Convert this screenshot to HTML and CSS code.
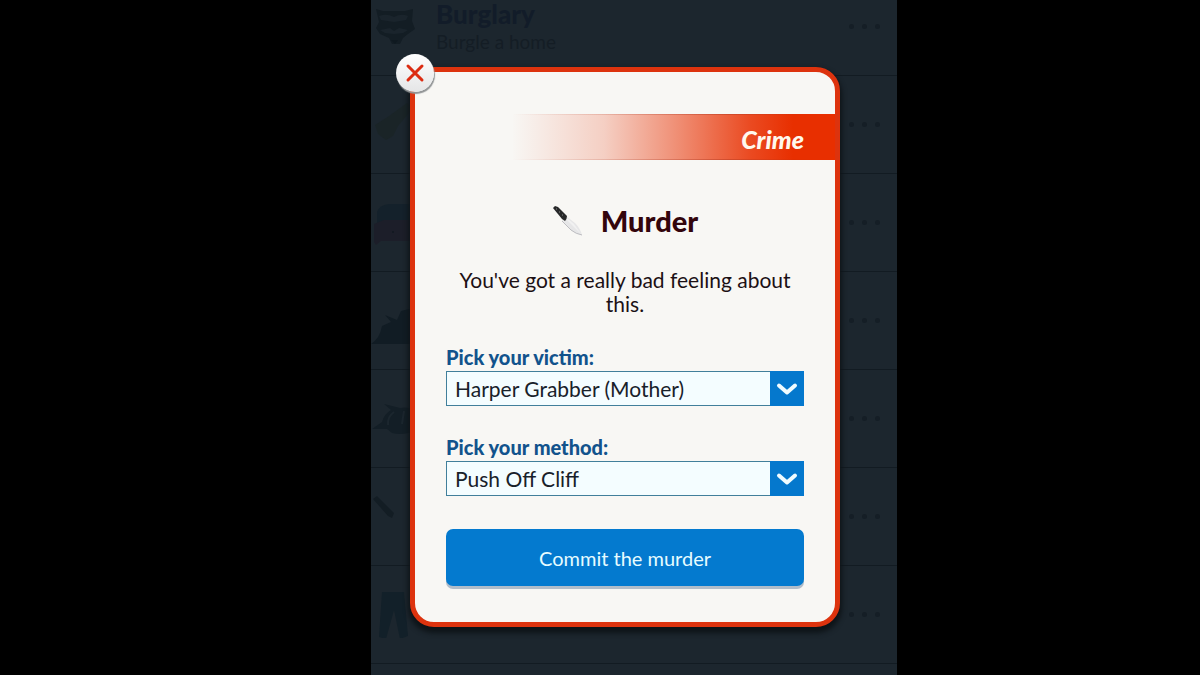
FILE: index.html
```
<!DOCTYPE html>
<html lang="en">
<head>
<meta charset="utf-8">
<meta name="viewport" content="width=device-width, initial-scale=1">
<title>Crime</title>
<link rel="stylesheet" href="styles.css">
</head>
<body>
<main class="phone">
  <ul class="crimes">
    <li class="crime">
      <svg class="crime-icon" viewBox="0 0 46 46" aria-hidden="true"><path fill="#131d24" d="M5 5l7 2h22l8-2-1 12 3 8-7 5-5 4-3 6h-8l-3-6-9-4-4-6 3-6z"/><path fill="#1a242c" d="M8 12q8-3 15 1 7-4 14-1l-2 4-12 2-13-2zM9 26l10-2 4 3 5-3 9 2-5 3-9 1-9-1z"/><path fill="#0f1920" d="M20 36h7l-3 4z"/></svg>
      <div class="crime-text"><h2 class="crime-name">Burglary</h2><p class="crime-note">Burgle a home</p></div>
      <span class="dots"><i></i><i></i><i></i></span>
    </li>
    <li class="crime">
      <svg class="crime-icon" viewBox="0 0 46 46" aria-hidden="true"><path fill="#1a2427" d="M4 23l14-9 18-13 6 5-15 18-5 10-7 4-8-6z"/></svg>
      <span class="dots"><i></i><i></i><i></i></span>
    </li>
    <li class="crime">
      <svg class="crime-icon" viewBox="0 0 46 46" aria-hidden="true"><path fill="#14212b" d="M6 25V12q2-7 12-8h28v21z"/><path fill="#1c1e29" d="M3 24l10-4h33v21H10l-5 4-2-3z"/><circle cx="22" cy="32" r="1" fill="#111820"/></svg>
      <span class="dots"><i></i><i></i><i></i></span>
    </li>
    <li class="crime">
      <svg class="crime-icon" viewBox="0 0 46 46" aria-hidden="true"><path fill="#111c24" d="M0 46q9-6 11-18l9-4-6-7 12 5 4-9 16-4v37z"/></svg>
      <span class="dots"><i></i><i></i><i></i></span>
    </li>
    <li class="crime">
      <svg class="crime-icon" viewBox="0 0 46 46" aria-hidden="true"><path fill="#131e26" d="M1 33l10-7q2-8 9-12l-7-6 16 4q8-2 17 3v19q-13 6-25 3l-5-4z"/><path fill="none" stroke="#1b262e" stroke-width="2" d="M23 16q-7 5-6 13M33 15l-2 13"/></svg>
      <span class="dots"><i></i><i></i><i></i></span>
    </li>
    <li class="crime">
      <svg class="crime-icon" viewBox="0 0 46 46" aria-hidden="true"><path fill="#131d24" d="M2 5l4-3 17 17-2 5-4-2z"/></svg>
      <span class="dots"><i></i><i></i><i></i></span>
    </li>
    <li class="crime">
      <svg class="crime-icon" viewBox="0 0 46 46" aria-hidden="true"><path fill="#122029" d="M11 0h22l4 44-8 3-6-29-8 29-7-2z"/></svg>
      <span class="dots"><i></i><i></i><i></i></span>
    </li>
    <li class="crime"></li>
  </ul>
  <div class="overlay">
    <section class="modal" role="dialog" aria-labelledby="modal-title">
      <button class="close" type="button" aria-label="Close">
        <svg width="20" height="20" viewBox="0 0 20 20" aria-hidden="true"><path d="M3 3l14 14M17 3L3 17" fill="none" stroke="#dc2c12" stroke-width="3" stroke-linecap="round"/></svg>
      </button>
      <p class="banner">Crime</p>
      <form class="content">
        <header class="heading">
          <svg width="32" height="32" viewBox="0 0 32 32" aria-hidden="true">
            <path d="M10 15l4-4 9 7q5 5 7 12-7-1-11-5z" fill="#e6e6e7"/><path d="M14 12l8 7 7 10-15-15z" fill="#f1f1f1"/><path d="M10 16l9 9q5 4 11 5" fill="none" stroke="#bdbdc1"/>
            <path d="M1 3l2-2 3 1 9 9q0 3-2 5l-3-2z" fill="#272829"/><path d="M4 4h1M7 7h1M10 10h1" stroke="#8b8b8b" stroke-width="1"/>
          </svg>
          <h1 class="title" id="modal-title">Murder</h1>
        </header>
        <p class="message">You've got a really bad feeling about this.</p>
        <div class="field">
          <label class="label" for="victim">Pick your victim:</label>
          <div class="picker">
            <select class="select" id="victim"><option>Harper Grabber (Mother)</option></select>
            <svg class="chevron" viewBox="0 0 34 34" aria-hidden="true"><path d="M9 14l8 7 8-7"/></svg>
          </div>
        </div>
        <div class="field">
          <label class="label" for="method">Pick your method:</label>
          <div class="picker">
            <select class="select" id="method"><option>Push Off Cliff</option></select>
            <svg class="chevron" viewBox="0 0 34 34" aria-hidden="true"><path d="M9 14l8 7 8-7"/></svg>
          </div>
        </div>
        <button class="commit" type="button">Commit the murder</button>
      </form>
    </section>
  </div>
</main>
</body>
</html>
```
FILE: styles.css
```
* { box-sizing: border-box; }
body {
  margin: 0;
  min-height: 100vh;
  background: #000;
  display: grid;
  grid-template-columns: 371fr 526fr 303fr;
  font-family: Lato, "Open Sans", sans-serif;
}
h1, h2, p, ul { margin: 0; padding: 0; }
.phone {
  grid-column: 2;
  position: relative;
  height: 100vh;
  overflow: hidden;
  background: #1c262e;
}
.crimes { list-style: none; margin-top: -22px; }
.crime {
  height: 98px;
  border-bottom: 1px solid #121b22;
  display: flex;
  align-items: center;
  padding-right: 17px;
}
.crime-icon { width: 46px; height: 46px; flex: none; }
.crime-text { padding-left: 19px; }
.crime-name { font-size: 26px; line-height: 30px; font-weight: 900; color: #121c29; }
.crime-note { font-size: 19px; line-height: 26px; color: #141d25; }
.dots { margin-left: auto; display: flex; gap: 8px; }
.dots i { width: 5px; height: 5px; border-radius: 50%; background: #151e26; }
.overlay {
  position: absolute;
  inset: 0;
  padding: 67px 57px 48px 39px;
}
.modal {
  position: relative;
  border: 5px solid #dd330e;
  border-radius: 24px;
  background: #f8f7f4;
  box-shadow: 0 4px 5px 2px #0e1418;
  padding: 42px 0 36px;
}
.close {
  position: absolute;
  top: -18px;
  left: -19px;
  width: 38px;
  height: 38px;
  border: 0;
  border-radius: 50%;
  padding: 0;
  display: grid;
  place-items: center;
  background: linear-gradient(#fff, #e4e5e6);
  box-shadow: 1px 2px 1px #929596;
}
.banner {
  height: 46px;
  padding-right: 31px;
  background:
    linear-gradient(to right, #a8301800 23%, #a8301866 75%, #a8301800 95%) top / 100% 1px no-repeat,
    linear-gradient(to right, #a8301800 23%, #a8301866 75%, #a8301800 95%) bottom / 100% 1px no-repeat,
    linear-gradient(to right, #e82f0000 23%, #e82f0033 45%, #e82f0088 63%, #e82f00dd 80%, #e82f00 90%);
  color: #fff8ee;
  font-size: 25px;
  line-height: 50px;
  font-style: italic;
  font-weight: 900;
  text-align: right;
}
.content { padding: 40px 31px 0; }
.heading { display: flex; align-items: center; justify-content: center; gap: 17px; }
.title { font-size: 29px; line-height: 42px; font-weight: 900; color: #33050c; }
.message {
  margin: 26px 0 27px;
  font-size: 21px;
  line-height: 24px;
  text-align: center;
  color: #1c1014;
}
.field { margin-bottom: 27px; }
.label { display: block; font-size: 20px; line-height: 28px; font-weight: 900; color: #12538c; }
.picker { position: relative; }
.select {
  display: block;
  width: 100%;
  height: 35px;
  appearance: none;
  border: 1px solid #417f9b;
  border-radius: 0;
  padding: 0 40px 0 8px;
  background: #f4fdff;
  color: #18212a;
  font: 21px/32px Lato, "Open Sans", sans-serif;
}
.chevron {
  position: absolute;
  top: 0;
  right: 0;
  width: 34px;
  height: 35px;
  background: #0578cd;
  pointer-events: none;
}
.chevron path { fill: none; stroke: #f0fcff; stroke-width: 4; stroke-linecap: round; stroke-linejoin: round; }
.commit {
  display: block;
  width: 100%;
  height: 57px;
  margin-top: 33px;
  border: 0;
  border-radius: 7px;
  background: #047acf;
  box-shadow: 0 3px 0 #b1bdca;
  color: #e7fcff;
  font: 20px/28px Lato, "Open Sans", sans-serif;
}
```
